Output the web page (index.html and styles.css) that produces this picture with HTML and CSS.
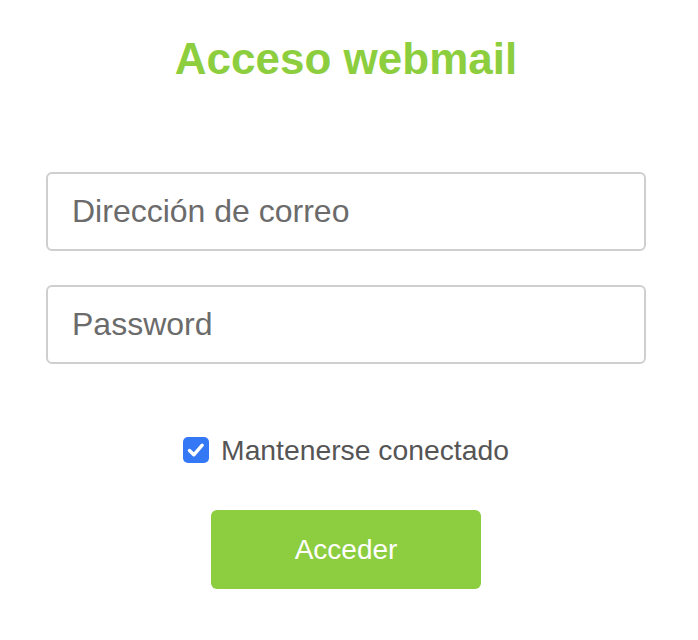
FILE: index.html
```html
<!DOCTYPE html>
<html lang="es">
<head>
  <meta charset="UTF-8">
  <title>Acceso webmail</title>
  <meta name="viewport" content="width=device-width, initial-scale=1.0">
  <link rel="stylesheet" href="styles.css">
</head>
<body>
  <div class="login">
    <h1>Acceso webmail</h1>
    <form class="login-form">
      <input type="text" class="field" placeholder="Dirección de correo">
      <input type="password" class="field" placeholder="Password">
      <label class="remember">
        <input type="checkbox" checked>
        <span class="box">
          <svg width="26" height="26" viewBox="0 0 26 26"><path d="M6.5 13.5l4.3 4.3 8.4-9.6" fill="none" stroke="#fff" stroke-width="3.4" stroke-linecap="round" stroke-linejoin="round"/></svg>
        </span>
        <span>Mantenerse conectado</span>
      </label>
      <button type="button" class="submit">Acceder</button>
    </form>
  </div>
</body>
</html>
```

FILE: styles.css
```css
body {
  margin: 0;
  background: #fff;
  font-family: 'Liberation Sans', Arial, sans-serif;
}
.login {
  width: 600px;
  margin-left: 46px;
  padding-top: 34px;
}
.login h1 {
  margin: 0;
  text-align: center;
  font-size: 44px;
  line-height: 50px;
  font-weight: 700;
  color: #8dce3e;
}
.login-form {
  display: flex;
  flex-direction: column;
  align-items: center;
  margin-top: 88px;
}
.field {
  width: 100%;
  height: 79px;
  box-sizing: border-box;
  margin-bottom: 34px;
  padding: 0 24px;
  border: 2px solid #cfcfcf;
  border-radius: 6px;
  background: #fff;
  font-family: inherit;
  font-size: 32px;
  color: #333;
  outline: none;
}
.field:last-of-type {
  margin-bottom: 0;
}
.field::placeholder {
  color: #6b6b6b;
}
.remember {
  display: flex;
  align-items: center;
  gap: 12px;
  margin-top: 70px;
  height: 32px;
  font-size: 28.3px;
  color: #555;
  cursor: pointer;
}
.remember input {
  display: none;
}
.remember .box {
  width: 26px;
  height: 26px;
  border-radius: 5px;
  background: #3478f6;
  display: flex;
  align-items: center;
  justify-content: center;
}
.submit {
  margin-top: 44px;
  width: 270px;
  height: 79px;
  border: none;
  border-radius: 6px;
  background: #8dcd40;
  color: #fff;
  font-family: inherit;
  font-size: 28px;
  cursor: pointer;
}
```
